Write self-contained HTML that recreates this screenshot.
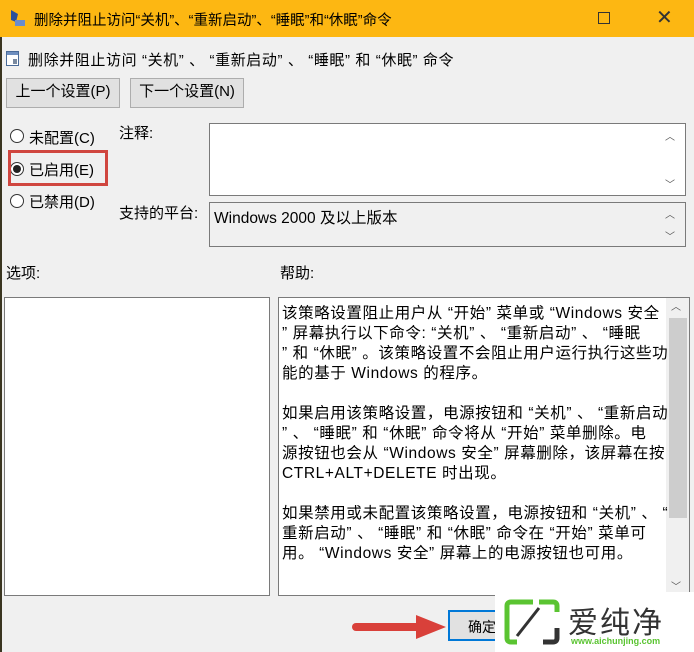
<!DOCTYPE html>
<html><head><meta charset="utf-8"><style>
*{margin:0;padding:0;box-sizing:border-box}
body{width:694px;height:652px;overflow:hidden;background:#f0f0f0;font-family:"Liberation Sans","Noto Sans CJK SC",sans-serif;font-size:14px;color:#000;position:relative}
.a{position:absolute;white-space:nowrap}
.box{position:absolute;background:#fff;border:1px solid #7a7a7a}
.btn{position:absolute;background:#e1e1e1;border:1px solid #adadad;text-align:center;line-height:26px;font-size:15px}
.radio{position:absolute;width:14px;height:14px;border:1px solid #333;border-radius:50%;background:#fff}
</style></head><body>
<div class="a" style="left:0;top:0;width:2px;height:652px;background:#3a3520"></div>
<div class="a" style="left:0;top:0;width:694px;height:37px;background:#fdb712"></div>
<svg class="a" style="left:8px;top:8px" width="18" height="20"><path d="M3 2 L10 6 L8 14 L3 12Z" fill="#2a4f9a"/><rect x="7" y="12" width="10" height="6" fill="#6a8ccc"/></svg>
<div class="a" style="left:34px;top:9px;font-size:14.5px">删除并阻止访问“关机”、“重新启动”、“睡眠”和“休眠”命令</div>
<div class="a" style="left:598px;top:12px;width:12px;height:12px;border:1px solid #333"></div>
<div class="a" style="left:656px;top:5px;font-size:20px;color:#333">✕</div>
<svg class="a" style="left:6px;top:51px" width="14" height="16"><rect x="0.5" y="0.5" width="12" height="14" fill="#fff" stroke="#4a6b99"/><rect x="1" y="1" width="11" height="3" fill="#6f8fbf"/><rect x="7" y="8" width="4" height="5" fill="#7a8aa0"/></svg>
<div class="a" style="left:28px;top:49px;font-size:15px;letter-spacing:0.6px">删除并阻止访问 “关机” 、 “重新启动” 、 “睡眠” 和 “休眠” 命令</div>
<div class="btn" style="left:6px;top:78px;width:114px;height:30px">上一个设置(P)</div>
<div class="btn" style="left:130px;top:78px;width:114px;height:30px">下一个设置(N)</div>
<div class="radio" style="left:10px;top:129px"></div><div class="a" style="left:29px;top:127px;font-size:15px">未配置(C)</div>
<div class="radio" style="left:10px;top:162px"></div><div class="a" style="left:13px;top:165px;width:8px;height:8px;border-radius:50%;background:#222"></div><div class="a" style="left:29px;top:159px;font-size:15px">已启用(E)</div>
<div class="a" style="left:8px;top:150px;width:100px;height:36px;border:3px solid #d0463f"></div>
<div class="radio" style="left:10px;top:194px"></div><div class="a" style="left:29px;top:191px;font-size:15px">已禁用(D)</div>
<div class="a" style="left:119px;top:122px;font-size:15px">注释:</div>
<div class="a" style="left:119px;top:202px;font-size:15px">支持的平台:</div>
<div class="box" style="left:209px;top:123px;width:477px;height:73px"></div>
<div class="a" style="left:665px;top:128px;font-size:10px;color:#555">︿</div>
<div class="a" style="left:665px;top:176px;font-size:10px;color:#555">﹀</div>
<div class="a" style="left:209px;top:202px;width:477px;height:45px;border:1px solid #7a7a7a;background:#f0f0f0"></div>
<div class="a" style="left:214px;top:206px;font-size:15.5px">Windows 2000 及以上版本</div>
<div class="a" style="left:665px;top:206px;font-size:10px;color:#555">︿</div>
<div class="a" style="left:665px;top:228px;font-size:10px;color:#555">﹀</div>
<div class="a" style="left:6px;top:262px;font-size:15px">选项:</div>
<div class="a" style="left:280px;top:262px;font-size:15px">帮助:</div>
<div class="box" style="left:4px;top:297px;width:266px;height:299px"></div>
<div class="box" style="left:278px;top:297px;width:412px;height:299px"></div>
<div class="a" style="left:666px;top:298px;width:23px;height:297px;background:#f0f0f0"></div>
<div class="a" style="left:669px;top:318px;width:18px;height:200px;background:#cdcdcd"></div>
<div class="a" style="left:671px;top:298px;font-size:10px;color:#555">︿</div>
<div class="a" style="left:671px;top:578px;font-size:10px;color:#555">﹀</div>
<div class="a" style="left:282px;top:304px;font-size:15.5px;line-height:20px;letter-spacing:0.6px">该策略设置阻止用户从 “开始” 菜单或 “Windows 安全<br>” 屏幕执行以下命令: “关机” 、 “重新启动” 、 “睡眠<br>” 和 “休眠” 。该策略设置不会阻止用户运行执行这些功<br>能的基于 Windows 的程序。<br><br>如果启用该策略设置，电源按钮和 “关机” 、 “重新启动<br>” 、 “睡眠” 和 “休眠” 命令将从 “开始” 菜单删除。电<br>源按钮也会从 “Windows 安全” 屏幕删除，该屏幕在按<br>CTRL+ALT+DELETE 时出现。<br><br>如果禁用或未配置该策略设置，电源按钮和 “关机” 、 “<br>重新启动” 、 “睡眠” 和 “休眠” 命令在 “开始” 菜单可<br>用。 “Windows 安全” 屏幕上的电源按钮也可用。</div>
<div class="a" style="left:448px;top:610px;width:70px;height:31px;border:2px solid #0078d7;background:#e1e1e1"></div>
<div class="a" style="left:468px;top:617px">确定</div>
<svg class="a" style="left:350px;top:610px" width="100" height="34"><path d="M6 17 H68" stroke="#d9403a" stroke-width="8" stroke-linecap="round"/><path d="M66 5 L96 17 L66 29Z" fill="#d9403a"/></svg>
<div class="a" style="left:495px;top:592px;width:199px;height:60px;background:#fff"></div>
<svg class="a" style="left:503px;top:598px" width="60" height="50"><path d="M30 4 H8 Q4 4 4 8 V40 Q4 44 8 44 H14" stroke="#5ac431" stroke-width="5" fill="none"/><path d="M36 4 H50 Q54 4 54 8 V14" stroke="#5ac431" stroke-width="5" fill="none"/><path d="M40 44 H50 Q54 44 54 40 V30" stroke="#333" stroke-width="5" fill="none"/><path d="M14 38 L36 10" stroke="#333" stroke-width="3"/></svg>
<div class="a" style="left:568px;top:598px;font-size:30px;color:#333;letter-spacing:2px">爱纯净</div>
<div class="a" style="left:571px;top:636px;font-size:9px;color:#5ac431;font-weight:bold">www.aichunjing.com</div>
</body></html>
